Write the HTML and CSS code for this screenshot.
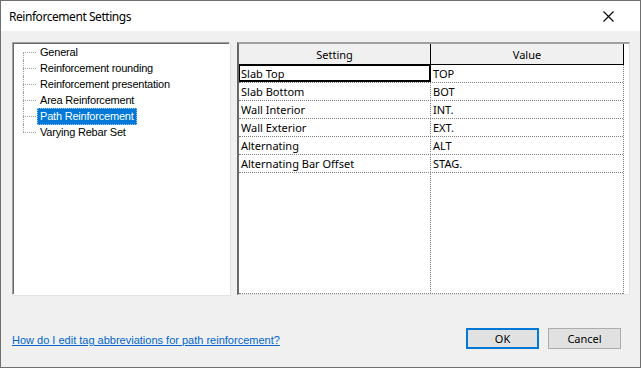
FILE: index.html
```html
<!DOCTYPE html>
<html lang="en">
<head>
    <meta charset="UTF-8">
    <title>Reinforcement Settings</title>
    <link rel="stylesheet" href="styles.css">
</head>
<body>
<div class="window">
    <div class="titlebar">
        <span class="title">Reinforcement Settings</span>
        <span class="close">
            <svg width="11" height="11" viewBox="0 0 11 11"><path d="M0.5 0.5 L10.5 10.5 M10.5 0.5 L0.5 10.5" stroke="#000" stroke-width="1.1" fill="none"/></svg>
        </span>
    </div>
    <div class="content">
        <div class="panels">
            <div class="tree">
                <ul class="tree-list">
                    <li><span>General</span></li>
                    <li><span>Reinforcement rounding</span></li>
                    <li><span>Reinforcement presentation</span></li>
                    <li><span>Area Reinforcement</span></li>
                    <li class="selected"><span>Path Reinforcement</span></li>
                    <li><span>Varying Rebar Set</span></li>
                </ul>
            </div>
            <div class="grid">
                <div class="grid-head">
                    <div class="head-cell">Setting</div>
                    <div class="head-cell">Value</div>
                </div>
                <div class="grid-body">
                    <div class="row"><div class="cell focus">Slab Top</div><div class="cell">TOP</div></div>
                    <div class="row"><div class="cell">Slab Bottom</div><div class="cell">BOT</div></div>
                    <div class="row"><div class="cell">Wall Interior</div><div class="cell">INT.</div></div>
                    <div class="row"><div class="cell">Wall Exterior</div><div class="cell">EXT.</div></div>
                    <div class="row"><div class="cell">Alternating</div><div class="cell">ALT</div></div>
                    <div class="row"><div class="cell">Alternating Bar Offset</div><div class="cell">STAG.</div></div>
                    <div class="row filler"><div class="cell"></div><div class="cell"></div></div>
                </div>
            </div>
        </div>
        <div class="footer">
            <a class="help" href="#">How do I edit tag abbreviations for path reinforcement?</a>
            <div class="buttons">
                <button class="btn default">OK</button>
                <button class="btn">Cancel</button>
            </div>
        </div>
    </div>
</div>
</body>
</html>
```

FILE: styles.css
```css
* {
    box-sizing: border-box;
}

body {
    margin: 0;
    font-family: 'Noto Sans', 'Liberation Sans', sans-serif;
    font-size: 11px;
    color: #000;
}

.window {
    width: 641px;
    height: 368px;
    border: 1px solid #6f6f6f;
    background-color: #f0f0f0;
    display: flex;
    flex-direction: column;
}

.titlebar {
    height: 30px;
    background-color: #fff;
    display: flex;
    align-items: center;
    justify-content: space-between;
    padding: 0 26px 0 8px;
}

.title {
    font-size: 12px;
    letter-spacing: -0.45px;
}

.close {
    display: flex;
    padding-top: 1px;
}

.content {
    flex: 1;
    display: flex;
    flex-direction: column;
    padding: 11px 10px 18px 11px;
}

.panels {
    display: flex;
    gap: 7px;
    height: 253px;
}

/* Arbol de la izquierda */
.tree {
    width: 218px;
    flex-shrink: 0;
    background: #fff;
    border-top: 1px solid #a0a0a0;
    border-left: 1px solid #a0a0a0;
    border-right: 1px solid #fff;
    border-bottom: 1px solid #fff;
    box-shadow: inset 1px 1px 0 #696969, 1px 1px 0 #e3e3e3;
    padding: 1px 0 0 10px;
    font-family: 'Liberation Sans', Arial, sans-serif;
}

.tree-list {
    list-style: none;
    margin: 0;
    padding: 0;
}

.tree-list li {
    position: relative;
    height: 16px;
    padding-left: 14px;
    display: flex;
    align-items: center;
}

.tree-list li::before {
    content: "";
    position: absolute;
    left: 0;
    top: 8px;
    width: 13px;
    border-top: 1px dotted #a0a0a0;
}

.tree-list li::after {
    content: "";
    position: absolute;
    left: 0;
    top: 0;
    bottom: 0;
    border-left: 1px dotted #a0a0a0;
}

.tree-list li:first-child::after {
    top: 8px;
}

.tree-list li:last-child::after {
    bottom: 8px;
}

.tree-list li span {
    padding: 0 2px;
    line-height: 15px;
    white-space: nowrap;
    letter-spacing: -0.2px;
    border: 1px dotted transparent;
}

.tree-list li.selected span {
    background-color: #0078d7;
    color: #fff;
    border-color: #9ec6ee;
}

/* Tabla de la derecha */
.grid {
    flex: 1;
    background: #fff;
    border-top: 2px solid #a0a0a0;
    border-left: 2px solid #696969;
    border-right: 1px solid #e3e3e3;
    border-bottom: 1px solid #e3e3e3;
    padding-right: 5px;
    display: flex;
    flex-direction: column;
}

.grid-head {
    display: flex;
    height: 21px;
    background-color: #f0f0f0;
    border-bottom: 1px solid #000;
    border-right: 1px solid #000;
}

.head-cell {
    width: 192px;
    display: flex;
    align-items: center;
    justify-content: center;
}

.head-cell:first-child {
    border-right: 1px solid #000;
}

.head-cell:last-child {
    flex: 1;
}

.grid-body {
    flex: 1;
    display: flex;
    flex-direction: column;
    border-right: 1px dotted #808080;
}

.row {
    display: flex;
    height: 18px;
    border-bottom: 1px dotted #808080;
}

.row.filler {
    flex: 1;
}

.cell {
    width: 192px;
    padding-left: 1px;
    display: flex;
    align-items: center;
    white-space: nowrap;
    border: 1px solid transparent;
}

.cell:first-child {
    border-right: 1px dotted #808080;
}

.cell:last-child {
    flex: 1;
}

.cell.focus {
    border: 1px solid #000;
    border-right: 2px solid #000;
    border-bottom: 2px solid #000;
}

/* Pie del dialogo */
.footer {
    flex: 1;
    display: flex;
    align-items: flex-end;
    justify-content: space-between;
    padding-right: 9px;
}

.help {
    color: #0066cc;
    font-family: 'Liberation Sans', Arial, sans-serif;
    font-size: 11px;
    margin-bottom: 3px;
}

.buttons {
    display: flex;
    gap: 9px;
}

.btn {
    width: 73px;
    height: 21px;
    font-family: inherit;
    font-size: 11px;
    background-color: #e1e1e1;
    border: 1px solid #adadad;
    padding: 0;
}

.btn.default {
    border: 2px solid #0078d7;
}
```
